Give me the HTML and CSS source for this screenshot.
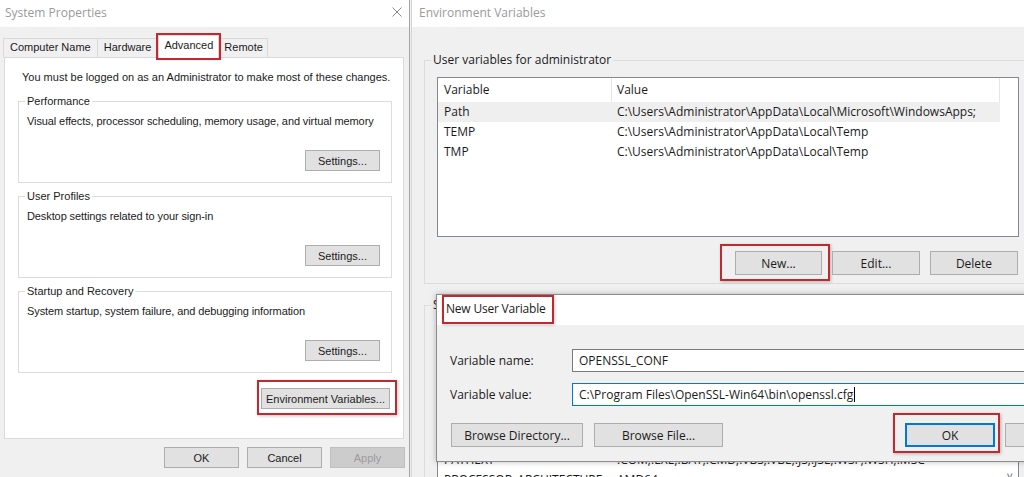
FILE: index.html
```html
<!DOCTYPE html>
<html lang="en">
<head>
    <meta charset="UTF-8">
    <meta name="viewport" content="width=device-width, initial-scale=1.0">
    <title>System Properties - Environment Variables</title>
    <link rel="stylesheet" href="styles.css">
</head>
<body>
    <div class="desktop">
        <!-- System Properties window -->
        <section class="window sysprops">
            <div class="titlebar">
                <span class="title">System Properties</span>
                <svg class="close" width="10" height="10" viewBox="0 0 10 10">
                    <path d="M0.5 0.5L9.5 9.5M9.5 0.5L0.5 9.5" stroke="#8a8a8a" stroke-width="1" fill="none"/>
                </svg>
            </div>
            <div class="sys-body">
                <div class="tabs">
                    <div class="tab">Computer Name</div>
                    <div class="tab">Hardware</div>
                    <div class="tab tab-active">Advanced</div>
                    <div class="tab">Remote</div>
                </div>
                <div class="tab-panel">
                    <p class="note">You must be logged on as an Administrator to make most of these changes.</p>

                    <fieldset class="group">
                        <legend>Performance</legend>
                        <p class="group-text">Visual effects, processor scheduling, memory usage, and virtual memory</p>
                        <div class="group-actions"><button class="btn">Settings...</button></div>
                    </fieldset>

                    <fieldset class="group">
                        <legend>User Profiles</legend>
                        <p class="group-text">Desktop settings related to your sign-in</p>
                        <div class="group-actions"><button class="btn">Settings...</button></div>
                    </fieldset>

                    <fieldset class="group">
                        <legend>Startup and Recovery</legend>
                        <p class="group-text">System startup, system failure, and debugging information</p>
                        <div class="group-actions"><button class="btn">Settings...</button></div>
                    </fieldset>

                    <div class="panel-actions">
                        <span class="mark mark-env"><button class="btn btn-env">Environment Variables...</button></span>
                    </div>
                </div>
                <div class="dialog-actions">
                    <button class="btn">OK</button>
                    <button class="btn">Cancel</button>
                    <button class="btn" disabled>Apply</button>
                </div>
            </div>
        </section>

        <!-- Environment Variables window -->
        <section class="window envvars">
            <div class="titlebar">
                <span class="title">Environment Variables</span>
            </div>
            <div class="env-body">
                <fieldset class="env-group">
                    <legend>User variables for administrator</legend>
                    <div class="list list-user">
                        <div class="list-row list-head">
                            <div class="cell">Variable</div>
                            <div class="cell">Value</div>
                        </div>
                        <div class="list-row row-selected">
                            <div class="cell">Path</div>
                            <div class="cell">C:\Users\Administrator\AppData\Local\Microsoft\WindowsApps;</div>
                        </div>
                        <div class="list-row">
                            <div class="cell">TEMP</div>
                            <div class="cell">C:\Users\Administrator\AppData\Local\Temp</div>
                        </div>
                        <div class="list-row">
                            <div class="cell">TMP</div>
                            <div class="cell">C:\Users\Administrator\AppData\Local\Temp</div>
                        </div>
                    </div>
                    <div class="env-actions">
                        <span class="mark mark-new"><button class="btn btn-env-action">New...</button></span>
                        <button class="btn btn-env-action">Edit...</button>
                        <button class="btn btn-env-action">Delete</button>
                    </div>
                </fieldset>

                <fieldset class="env-group env-group-system">
                    <legend>System variables</legend>
                    <!-- only the rows that show below the dialog -->
                    <div class="list list-system">
                        <div class="list-row"><div class="cell">PATHEXT</div><div class="cell">.COM;.EXE;.BAT;.CMD;.VBS;.VBE;.JS;.JSE;.WSF;.WSH;.MSC</div></div>
                        <div class="list-row"><div class="cell">PROCESSOR_ARCHITECTURE</div><div class="cell">AMD64</div></div>
                        <span class="scroll-arrow">&#709;</span>
                    </div>
                </fieldset>
            </div>

            <!-- New User Variable dialog, on top of the list -->
            <div class="popup">
                <div class="popup-title">
                    <span class="mark mark-title">New User Variable</span>
                </div>
                <div class="popup-body">
                    <div class="field">
                        <label class="field-label">Variable name:</label>
                        <div class="field-input">OPENSSL_CONF</div>
                    </div>
                    <div class="field">
                        <label class="field-label">Variable value:</label>
                        <div class="field-input field-focus">C:\Program Files\OpenSSL-Win64\bin\openssl.cfg<span class="caret"></span></div>
                    </div>
                    <div class="popup-actions">
                        <button class="btn btn-browse-dir">Browse Directory...</button>
                        <button class="btn btn-browse-file">Browse File...</button>
                        <span class="mark mark-ok"><button class="btn btn-popup btn-default">OK</button></span>
                        <button class="btn btn-popup">Cancel</button>
                    </div>
                </div>
            </div>
        </section>
    </div>
</body>
</html>
```

FILE: styles.css
```css
* {
    box-sizing: border-box;
}

body {
    margin: 0;
    width: 1024px;
    height: 477px;
    overflow: hidden;
    background-color: #f0f0f0;
    font-family: "Liberation Sans", Arial, sans-serif;
    font-size: 11px;
    color: #1b1b1b;
}

.desktop {
    display: flex;
    height: 477px;
}

/* Windows */
.window {
    position: relative;
    display: flex;
    flex-direction: column;
    background-color: #f0f0f0;
    overflow: hidden;
}

.sysprops {
    width: 410px;
    flex: none;
    border-right: 1px solid #a3a3a3;
}

.envvars {
    flex: 1;
    margin-left: 1px;
    border-left: 1px solid #d6d6d6;
    font-family: "Open Sans", sans-serif;
    font-size: 12px;
}

.titlebar {
    height: 27px;
    flex: none;
    display: flex;
    align-items: center;
    justify-content: space-between;
    padding: 0 7px 3px 5px;
    background-color: #fff;
    font-family: "Open Sans", sans-serif;
    font-size: 12px;
    color: #9a9a9a;
}

.envvars .titlebar {
    padding-left: 7px;
}

.btn {
    height: 21px;
    margin: 0;
    padding: 0;
    background-color: #e1e1e1;
    border: 1px solid #adadad;
    font-family: inherit;
    font-size: inherit;
    color: #1b1b1b;
}

.btn:disabled {
    background-color: #cccccc;
    border-color: #bfbfbf;
    color: #9c9c9c;
}

/* Red annotation boxes */
.mark {
    display: inline-flex;
    border: 2px solid #be2a30;
    box-shadow: 1px 1px 3px rgba(0, 0, 0, 0.25);
}

/* System Properties body */
.sys-body {
    padding: 11px 5px 0 4px;
}

.tabs {
    display: flex;
    align-items: flex-end;
    height: 19px;
    margin-left: -1px;
}

.tab {
    height: 19px;
    line-height: 17px;
    padding: 0 6px;
    border: 1px solid #d9d9d9;
    border-bottom: none;
    margin-right: -1px;
    background-color: #f0f0f0;
}

.tab:last-child {
    padding: 0 4px;
}

.tab-active {
    position: relative;
    z-index: 2;
    height: 23px;
    margin: 0 0 -1px 1px;
    padding: 0 5px;
    line-height: 18px;
    background-color: #fff;
    outline: 2px solid #be2a30;
    box-shadow: 1px 1px 3px rgba(0, 0, 0, 0.25);
}

.tab-panel {
    position: relative;
    height: 382px;
    padding: 13px 11px 0 13px;
    background-color: #fff;
    border: 1px solid #d9d9d9;
}

.note {
    margin: 0 0 11px 4px;
    line-height: 13px;
}

.group {
    margin: 0 0 7px 0;
    padding: 7px 11px 11px 8px;
    border: 1px solid #dcdcdc;
}

.group legend {
    padding: 0 2px;
    margin-left: -2px;
    line-height: 13px;
}

.group-text {
    margin: 0;
    line-height: 13px;
    white-space: nowrap;
    letter-spacing: -0.1px;
}

.group-actions {
    display: flex;
    justify-content: flex-end;
    margin-top: 22px;
}

.group-actions .btn {
    width: 75px;
}

.panel-actions {
    display: flex;
    justify-content: flex-end;
    margin-right: -5px;
}

.mark-env {
    padding: 6px 5px 4px 2px;
}

.btn-env {
    width: 129px;
}

.dialog-actions {
    display: flex;
    justify-content: flex-end;
    gap: 8px;
    margin: 8px -1px 0 0;
}

.dialog-actions .btn {
    width: 75px;
}

/* Environment Variables body */
.env-body {
    padding: 25px 0 0 12px;
}

.env-group {
    width: 608px;
    margin: 0;
    padding: 9px 12px 8px 12px;
    border: 1px solid #dcdcdc;
}

.env-group legend {
    padding: 0 2px;
    margin-left: -6px;
    line-height: 16px;
}

.env-group-system {
    margin-top: 13px;
    padding-top: 8px;
}

.list {
    position: relative;
    height: 160px;
    background-color: #fff;
    border: 1px solid #828790;
    overflow: hidden;
}

.list-system {
    height: 240px;
    padding-top: 128px;
}

.list-row {
    display: grid;
    grid-template-columns: 174px 388px;
    width: 562px;
    height: 20px;
    line-height: 20px;
    white-space: nowrap;
}

.list-row .cell {
    padding-left: 6px;
    overflow: hidden;
}

.list-row .cell + .cell {
    padding-left: 5px;
}

.list-head {
    height: 24px;
    line-height: 24px;
}

.list-head .cell {
    border-right: 1px solid #e5e5e5;
}

.row-selected {
    background-color: #efefef;
}

.scroll-arrow {
    position: absolute;
    top: 146px;
    right: 5px;
    font-size: 11px;
    color: #606060;
}

.env-actions {
    display: flex;
    justify-content: flex-end;
    gap: 10px;
    margin: 14px 1px 0 0;
}

.btn-env-action {
    width: 88px;
    height: 24px;
}

.mark-new {
    margin: -7px -8px -6px -15px;
    padding: 5px 6px 4px 13px;
}

.mark-new .btn {
    width: 87px;
}

/* New User Variable dialog */
.popup {
    position: absolute;
    top: 294px;
    left: 24px;
    width: 680px;
    background-color: #f0f0f0;
    border: 1px solid #8c8c8c;
    box-shadow: 0 0 6px rgba(0, 0, 0, 0.25);
}

.popup-title {
    height: 30px;
    padding-left: 5px;
    background-color: #fff;
}

.mark-title {
    height: 29px;
    align-items: center;
    padding: 0 6px 2px 2px;
    letter-spacing: -0.2px;
    box-shadow: 1px 1px 3px rgba(0, 0, 0, 0.2);
}

.popup-body {
    padding: 24px 20px 14px 13px;
}

.field {
    display: flex;
    align-items: center;
    height: 23px;
    margin-bottom: 11px;
}

.field-label {
    width: 122px;
    flex: none;
}

.field-input {
    flex: 1;
    height: 23px;
    line-height: 21px;
    padding-left: 6px;
    background-color: #fff;
    border: 1px solid #7a7a7a;
    white-space: nowrap;
}

.field-focus {
    border-color: #0078d7;
}

.caret {
    display: inline-block;
    width: 1px;
    height: 15px;
    margin-left: 1px;
    vertical-align: -3px;
    background-color: #000;
}

.popup-actions {
    display: flex;
    align-items: center;
    gap: 11px;
    margin-top: 17px;
    padding-left: 1px;
}

.popup-actions .btn {
    height: 24px;
}

.btn-browse-dir {
    width: 132px;
}

.btn-browse-file {
    width: 129px;
}

.btn-popup {
    width: 90px;
}

.btn-default {
    border: 2px solid #0078d7;
}

.mark-ok {
    margin: -10px -5px -6px auto;
    padding: 8px 3px 4px 10px;
}

.mark-ok + .btn {
    margin-left: -1px;
}
```
